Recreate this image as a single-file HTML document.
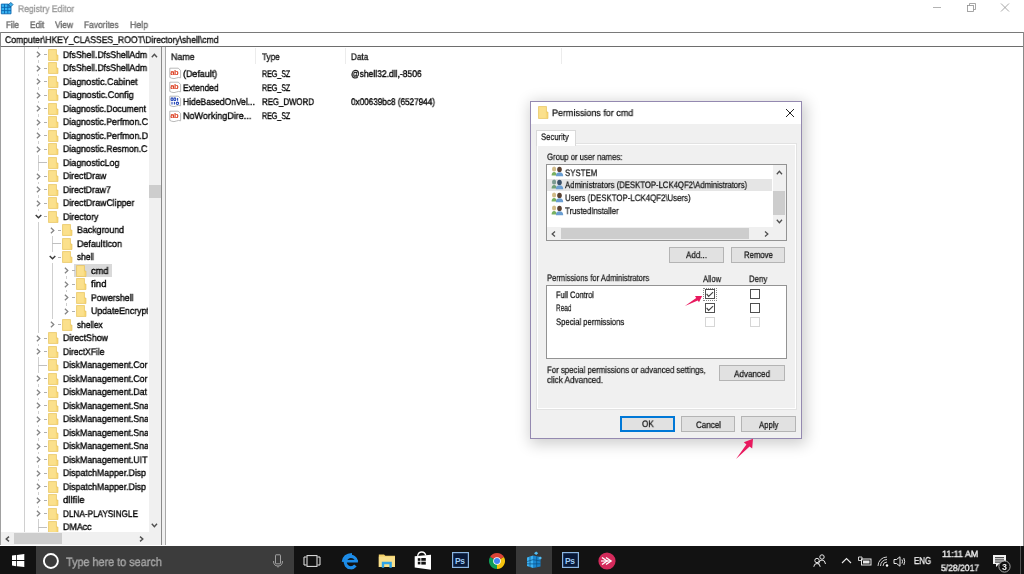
<!DOCTYPE html>
<html><head><meta charset="utf-8">
<style>
*{margin:0;padding:0;box-sizing:border-box}
html,body{width:1024px;height:574px;overflow:hidden;background:#fff}
body{position:relative;font-family:"Liberation Sans",sans-serif;color:#000}
.ab{position:absolute}
.t{position:absolute;white-space:nowrap;line-height:1;text-rendering:geometricPrecision;-webkit-text-stroke:0.35px currentColor;will-change:transform}
.dt{position:absolute;white-space:nowrap;line-height:1;font-size:8px;letter-spacing:-0.15px;color:#1a1a1a}
svg{position:absolute;overflow:visible}
</style></head><body>

<svg style="left:0px;top:0px" width="16" height="16" viewBox="0 0 16 16">
<path d="M1.3 4.1 H8.6 V6.4 H11 V13.8 H1.3 Z" fill="#38b4f2"/>
<g stroke="#0b66b0" stroke-width="0.9" fill="none"><path d="M1.3 4.1 H8.6 V6.4 H11 V13.8 H1.3 Z"/><line x1="4.5" y1="4.1" x2="4.5" y2="13.8"/><line x1="7.8" y1="4.1" x2="7.8" y2="13.8"/><line x1="1.3" y1="7.4" x2="11" y2="7.4"/><line x1="1.3" y1="10.6" x2="11" y2="10.6"/></g>
<polygon points="10.8,2.4 13,4.6 10.8,6.8 8.6,4.6" fill="#3ab0ee" stroke="#0b5a96" stroke-width="0.8"/>
</svg>
<div class="t" style="left:17.50px;top:5.00px;font-size:9.6px;letter-spacing:0px;color:#9a9a9a;transform:scaleX(0.8928);transform-origin:0 0;">Registry Editor</div>
<svg style="left:925px;top:0px" width="99" height="16" viewBox="0 0 99 16">
<line x1="8" y1="7.5" x2="16" y2="7.5" stroke="#a0a0a0" stroke-width="0.8"/>
<rect x="42.5" y="5.5" width="6" height="6" fill="none" stroke="#909090" stroke-width="0.8"/>
<polyline points="44.5,5.5 44.5,3.5 50.5,3.5 50.5,9.5 48.5,9.5" fill="none" stroke="#909090" stroke-width="0.8"/>
<line x1="76" y1="3.5" x2="84" y2="11.5" stroke="#909090" stroke-width="0.8"/>
<line x1="84" y1="3.5" x2="76" y2="11.5" stroke="#909090" stroke-width="0.8"/>
</svg>
<div class="t" style="left:5.80px;top:21.00px;font-size:9.6px;letter-spacing:0px;color:#6a6a6a;transform:scaleX(0.8404);transform-origin:0 0;">File</div>
<div class="t" style="left:29.70px;top:21.00px;font-size:9.6px;letter-spacing:0px;color:#6a6a6a;transform:scaleX(0.8645);transform-origin:0 0;">Edit</div>
<div class="t" style="left:55.00px;top:21.00px;font-size:9.6px;letter-spacing:0px;color:#6a6a6a;transform:scaleX(0.8723);transform-origin:0 0;">View</div>
<div class="t" style="left:84.40px;top:21.00px;font-size:9.6px;letter-spacing:0px;color:#6a6a6a;transform:scaleX(0.8765);transform-origin:0 0;">Favorites</div>
<div class="t" style="left:130.00px;top:21.00px;font-size:9.6px;letter-spacing:0px;color:#6a6a6a;transform:scaleX(0.9117);transform-origin:0 0;">Help</div>
<div class="ab" style="left:0px;top:32px;width:1024px;height:1px;background:#7a7a7a;"></div>
<div class="ab" style="left:0px;top:46px;width:1024px;height:1px;background:#6e6e6e;"></div>
<div class="ab" style="left:0px;top:32px;width:1px;height:15px;background:#8a8a8a;"></div>
<div class="ab" style="left:1023px;top:32px;width:1px;height:514px;background:#8a8a8a;"></div>
<div class="t" style="left:5.00px;top:36.00px;font-size:9.6px;letter-spacing:0px;color:#111;transform:scaleX(0.8977);transform-origin:0 0;">Computer\HKEY_CLASSES_ROOT\Directory\shell\cmd</div>
<div class="ab" style="left:0px;top:47px;width:1px;height:498px;background:#a0a0a0;"></div>
<div class="ab" style="left:161px;top:47px;width:1px;height:498px;background:#8a8a8a;"></div>
<div class="ab" style="left:162px;top:47px;width:3px;height:498px;background:#f0f0f0;"></div>
<div class="ab" style="left:165px;top:47px;width:1px;height:498px;background:#a8a8a8;"></div>
<div class="ab" style="left:24px;top:47px;width:1px;height:485px;background:#d0d0d0;"></div>
<div class="ab" style="left:1px;top:47px;width:147px;height:485px;overflow:hidden">
<div class="ab" style="left:37px;top:0px;width:1px;height:485px;background:#cfcfcf"></div>
<div class="ab" style="left:51px;top:183.0px;width:1px;height:94.5px;background:#cfcfcf"></div>
<div class="ab" style="left:65px;top:223.5px;width:1px;height:40.5px;background:#cfcfcf"></div>
<div class="ab" style="left:72.5px;top:217.3px;width:38px;height:12.5px;background:#d9d9d9"></div>
<div class="ab" style="left:33px;top:2.0px;width:9px;height:11px;background:#fff;"></div>
<svg style="left:34.5px;top:4.0px" width="5" height="7" viewBox="0 0 5 7"><polyline points="0.9,0.7 3.8,3.5 0.9,6.3" fill="none" stroke="#858585" stroke-width="1.3"/></svg>
<div class="ab" style="left:42.6px;top:7.0px;width:3px;height:1px;background:#b0b0b0;"></div>
<svg style="left:47px;top:1.7999999999999972px" width="11" height="12" viewBox="0 0 11 12"><path d="M0.5 0.5 H8.5 V6 H10 V11.5 H0.5 Z" fill="#f8d878" stroke="#e6bf55" stroke-width="0.6"/><rect x="1.2" y="1.2" width="6.6" height="9.6" fill="#fbe08c"/></svg>
<div class="t" style="left:61.50px;top:4.00px;font-size:9.6px;letter-spacing:0px;color:#000;transform:scaleX(0.8967);transform-origin:0 0;">DfsShell.DfsShellAdm</div>
<div class="ab" style="left:33px;top:15.5px;width:9px;height:11px;background:#fff;"></div>
<svg style="left:34.5px;top:17.5px" width="5" height="7" viewBox="0 0 5 7"><polyline points="0.9,0.7 3.8,3.5 0.9,6.3" fill="none" stroke="#858585" stroke-width="1.3"/></svg>
<div class="ab" style="left:42.6px;top:20.5px;width:3px;height:1px;background:#b0b0b0;"></div>
<svg style="left:47px;top:15.299999999999997px" width="11" height="12" viewBox="0 0 11 12"><path d="M0.5 0.5 H8.5 V6 H10 V11.5 H0.5 Z" fill="#f8d878" stroke="#e6bf55" stroke-width="0.6"/><rect x="1.2" y="1.2" width="6.6" height="9.6" fill="#fbe08c"/></svg>
<div class="t" style="left:61.50px;top:17.00px;font-size:9.6px;letter-spacing:0px;color:#000;transform:scaleX(0.8967);transform-origin:0 0;">DfsShell.DfsShellAdm</div>
<div class="ab" style="left:33px;top:29.0px;width:9px;height:11px;background:#fff;"></div>
<svg style="left:34.5px;top:31.0px" width="5" height="7" viewBox="0 0 5 7"><polyline points="0.9,0.7 3.8,3.5 0.9,6.3" fill="none" stroke="#858585" stroke-width="1.3"/></svg>
<div class="ab" style="left:42.6px;top:34.0px;width:3px;height:1px;background:#b0b0b0;"></div>
<svg style="left:47px;top:28.799999999999997px" width="11" height="12" viewBox="0 0 11 12"><path d="M0.5 0.5 H8.5 V6 H10 V11.5 H0.5 Z" fill="#f8d878" stroke="#e6bf55" stroke-width="0.6"/><rect x="1.2" y="1.2" width="6.6" height="9.6" fill="#fbe08c"/></svg>
<div class="t" style="left:61.50px;top:31.00px;font-size:9.6px;letter-spacing:0px;color:#000;transform:scaleX(0.9271);transform-origin:0 0;">Diagnostic.Cabinet</div>
<div class="ab" style="left:33px;top:42.5px;width:9px;height:11px;background:#fff;"></div>
<svg style="left:34.5px;top:44.5px" width="5" height="7" viewBox="0 0 5 7"><polyline points="0.9,0.7 3.8,3.5 0.9,6.3" fill="none" stroke="#858585" stroke-width="1.3"/></svg>
<div class="ab" style="left:42.6px;top:47.5px;width:3px;height:1px;background:#b0b0b0;"></div>
<svg style="left:47px;top:42.3px" width="11" height="12" viewBox="0 0 11 12"><path d="M0.5 0.5 H8.5 V6 H10 V11.5 H0.5 Z" fill="#f8d878" stroke="#e6bf55" stroke-width="0.6"/><rect x="1.2" y="1.2" width="6.6" height="9.6" fill="#fbe08c"/></svg>
<div class="t" style="left:61.50px;top:44.00px;font-size:9.6px;letter-spacing:0px;color:#000;transform:scaleX(0.9410);transform-origin:0 0;">Diagnostic.Config</div>
<div class="ab" style="left:33px;top:56.0px;width:9px;height:11px;background:#fff;"></div>
<svg style="left:34.5px;top:58.0px" width="5" height="7" viewBox="0 0 5 7"><polyline points="0.9,0.7 3.8,3.5 0.9,6.3" fill="none" stroke="#858585" stroke-width="1.3"/></svg>
<div class="ab" style="left:42.6px;top:61.0px;width:3px;height:1px;background:#b0b0b0;"></div>
<svg style="left:47px;top:55.8px" width="11" height="12" viewBox="0 0 11 12"><path d="M0.5 0.5 H8.5 V6 H10 V11.5 H0.5 Z" fill="#f8d878" stroke="#e6bf55" stroke-width="0.6"/><rect x="1.2" y="1.2" width="6.6" height="9.6" fill="#fbe08c"/></svg>
<div class="t" style="left:61.50px;top:58.00px;font-size:9.6px;letter-spacing:0px;color:#000;transform:scaleX(0.9100);transform-origin:0 0;">Diagnostic.Document</div>
<div class="ab" style="left:33px;top:69.5px;width:9px;height:11px;background:#fff;"></div>
<svg style="left:34.5px;top:71.5px" width="5" height="7" viewBox="0 0 5 7"><polyline points="0.9,0.7 3.8,3.5 0.9,6.3" fill="none" stroke="#858585" stroke-width="1.3"/></svg>
<div class="ab" style="left:42.6px;top:74.5px;width:3px;height:1px;background:#b0b0b0;"></div>
<svg style="left:47px;top:69.3px" width="11" height="12" viewBox="0 0 11 12"><path d="M0.5 0.5 H8.5 V6 H10 V11.5 H0.5 Z" fill="#f8d878" stroke="#e6bf55" stroke-width="0.6"/><rect x="1.2" y="1.2" width="6.6" height="9.6" fill="#fbe08c"/></svg>
<div class="t" style="left:61.50px;top:71.00px;font-size:9.6px;letter-spacing:0px;color:#000;transform:scaleX(0.9100);transform-origin:0 0;">Diagnostic.Perfmon.C</div>
<div class="ab" style="left:33px;top:83.0px;width:9px;height:11px;background:#fff;"></div>
<svg style="left:34.5px;top:85.0px" width="5" height="7" viewBox="0 0 5 7"><polyline points="0.9,0.7 3.8,3.5 0.9,6.3" fill="none" stroke="#858585" stroke-width="1.3"/></svg>
<div class="ab" style="left:42.6px;top:88.0px;width:3px;height:1px;background:#b0b0b0;"></div>
<svg style="left:47px;top:82.80000000000001px" width="11" height="12" viewBox="0 0 11 12"><path d="M0.5 0.5 H8.5 V6 H10 V11.5 H0.5 Z" fill="#f8d878" stroke="#e6bf55" stroke-width="0.6"/><rect x="1.2" y="1.2" width="6.6" height="9.6" fill="#fbe08c"/></svg>
<div class="t" style="left:61.50px;top:85.00px;font-size:9.6px;letter-spacing:0px;color:#000;transform:scaleX(0.9100);transform-origin:0 0;">Diagnostic.Perfmon.D</div>
<div class="ab" style="left:33px;top:96.5px;width:9px;height:11px;background:#fff;"></div>
<svg style="left:34.5px;top:98.5px" width="5" height="7" viewBox="0 0 5 7"><polyline points="0.9,0.7 3.8,3.5 0.9,6.3" fill="none" stroke="#858585" stroke-width="1.3"/></svg>
<div class="ab" style="left:42.6px;top:101.5px;width:3px;height:1px;background:#b0b0b0;"></div>
<svg style="left:47px;top:96.30000000000001px" width="11" height="12" viewBox="0 0 11 12"><path d="M0.5 0.5 H8.5 V6 H10 V11.5 H0.5 Z" fill="#f8d878" stroke="#e6bf55" stroke-width="0.6"/><rect x="1.2" y="1.2" width="6.6" height="9.6" fill="#fbe08c"/></svg>
<div class="t" style="left:61.50px;top:98.00px;font-size:9.6px;letter-spacing:0px;color:#000;transform:scaleX(0.9100);transform-origin:0 0;">Diagnostic.Resmon.C</div>
<div class="ab" style="left:37px;top:115.0px;width:9px;height:1px;background:#c0c0c0;"></div>
<svg style="left:47px;top:109.80000000000001px" width="11" height="12" viewBox="0 0 11 12"><path d="M0.5 0.5 H8.5 V6 H10 V11.5 H0.5 Z" fill="#f8d878" stroke="#e6bf55" stroke-width="0.6"/><rect x="1.2" y="1.2" width="6.6" height="9.6" fill="#fbe08c"/></svg>
<div class="t" style="left:61.50px;top:112.00px;font-size:9.6px;letter-spacing:0px;color:#000;transform:scaleX(0.9271);transform-origin:0 0;">DiagnosticLog</div>
<div class="ab" style="left:33px;top:123.5px;width:9px;height:11px;background:#fff;"></div>
<svg style="left:34.5px;top:125.5px" width="5" height="7" viewBox="0 0 5 7"><polyline points="0.9,0.7 3.8,3.5 0.9,6.3" fill="none" stroke="#858585" stroke-width="1.3"/></svg>
<div class="ab" style="left:42.6px;top:128.5px;width:3px;height:1px;background:#b0b0b0;"></div>
<svg style="left:47px;top:123.30000000000001px" width="11" height="12" viewBox="0 0 11 12"><path d="M0.5 0.5 H8.5 V6 H10 V11.5 H0.5 Z" fill="#f8d878" stroke="#e6bf55" stroke-width="0.6"/><rect x="1.2" y="1.2" width="6.6" height="9.6" fill="#fbe08c"/></svg>
<div class="t" style="left:61.50px;top:125.00px;font-size:9.6px;letter-spacing:0px;color:#000;transform:scaleX(0.9122);transform-origin:0 0;">DirectDraw</div>
<div class="ab" style="left:33px;top:137.0px;width:9px;height:11px;background:#fff;"></div>
<svg style="left:34.5px;top:139.0px" width="5" height="7" viewBox="0 0 5 7"><polyline points="0.9,0.7 3.8,3.5 0.9,6.3" fill="none" stroke="#858585" stroke-width="1.3"/></svg>
<div class="ab" style="left:42.6px;top:142.0px;width:3px;height:1px;background:#b0b0b0;"></div>
<svg style="left:47px;top:136.8px" width="11" height="12" viewBox="0 0 11 12"><path d="M0.5 0.5 H8.5 V6 H10 V11.5 H0.5 Z" fill="#f8d878" stroke="#e6bf55" stroke-width="0.6"/><rect x="1.2" y="1.2" width="6.6" height="9.6" fill="#fbe08c"/></svg>
<div class="t" style="left:61.50px;top:139.00px;font-size:9.6px;letter-spacing:0px;color:#000;transform:scaleX(0.9052);transform-origin:0 0;">DirectDraw7</div>
<div class="ab" style="left:33px;top:150.5px;width:9px;height:11px;background:#fff;"></div>
<svg style="left:34.5px;top:152.5px" width="5" height="7" viewBox="0 0 5 7"><polyline points="0.9,0.7 3.8,3.5 0.9,6.3" fill="none" stroke="#858585" stroke-width="1.3"/></svg>
<div class="ab" style="left:42.6px;top:155.5px;width:3px;height:1px;background:#b0b0b0;"></div>
<svg style="left:47px;top:150.3px" width="11" height="12" viewBox="0 0 11 12"><path d="M0.5 0.5 H8.5 V6 H10 V11.5 H0.5 Z" fill="#f8d878" stroke="#e6bf55" stroke-width="0.6"/><rect x="1.2" y="1.2" width="6.6" height="9.6" fill="#fbe08c"/></svg>
<div class="t" style="left:61.50px;top:152.00px;font-size:9.6px;letter-spacing:0px;color:#000;transform:scaleX(0.9155);transform-origin:0 0;">DirectDrawClipper</div>
<div class="ab" style="left:32.5px;top:164.0px;width:10px;height:11px;background:#fff;"></div>
<svg style="left:33.5px;top:167.0px" width="7" height="5" viewBox="0 0 7 5"><polyline points="0.7,0.9 3.5,3.8 6.3,0.9" fill="none" stroke="#3a3a3a" stroke-width="1.4"/></svg>
<div class="ab" style="left:42.6px;top:169.0px;width:3px;height:1px;background:#b0b0b0;"></div>
<svg style="left:47px;top:163.8px" width="11" height="12" viewBox="0 0 11 12"><path d="M0.5 0.5 H8.5 V6 H10 V11.5 H0.5 Z" fill="#f8d878" stroke="#e6bf55" stroke-width="0.6"/><rect x="1.2" y="1.2" width="6.6" height="9.6" fill="#fbe08c"/></svg>
<div class="t" style="left:61.50px;top:166.00px;font-size:9.6px;letter-spacing:0px;color:#000;transform:scaleX(0.9244);transform-origin:0 0;">Directory</div>
<div class="ab" style="left:47px;top:177.5px;width:9px;height:11px;background:#fff;"></div>
<svg style="left:48.5px;top:179.5px" width="5" height="7" viewBox="0 0 5 7"><polyline points="0.9,0.7 3.8,3.5 0.9,6.3" fill="none" stroke="#858585" stroke-width="1.3"/></svg>
<div class="ab" style="left:56.6px;top:182.5px;width:3px;height:1px;background:#b0b0b0;"></div>
<svg style="left:61px;top:177.3px" width="11" height="12" viewBox="0 0 11 12"><path d="M0.5 0.5 H8.5 V6 H10 V11.5 H0.5 Z" fill="#f8d878" stroke="#e6bf55" stroke-width="0.6"/><rect x="1.2" y="1.2" width="6.6" height="9.6" fill="#fbe08c"/></svg>
<div class="t" style="left:76.00px;top:179.00px;font-size:9.6px;letter-spacing:0px;color:#000;transform:scaleX(0.9194);transform-origin:0 0;">Background</div>
<div class="ab" style="left:51px;top:196.0px;width:9px;height:1px;background:#c0c0c0;"></div>
<svg style="left:61px;top:190.8px" width="11" height="12" viewBox="0 0 11 12"><path d="M0.5 0.5 H8.5 V6 H10 V11.5 H0.5 Z" fill="#f8d878" stroke="#e6bf55" stroke-width="0.6"/><rect x="1.2" y="1.2" width="6.6" height="9.6" fill="#fbe08c"/></svg>
<div class="t" style="left:76.00px;top:193.00px;font-size:9.6px;letter-spacing:0px;color:#000;transform:scaleX(0.9267);transform-origin:0 0;">DefaultIcon</div>
<div class="ab" style="left:46.5px;top:204.5px;width:10px;height:11px;background:#fff;"></div>
<svg style="left:47.5px;top:207.5px" width="7" height="5" viewBox="0 0 7 5"><polyline points="0.7,0.9 3.5,3.8 6.3,0.9" fill="none" stroke="#3a3a3a" stroke-width="1.4"/></svg>
<div class="ab" style="left:56.6px;top:209.5px;width:3px;height:1px;background:#b0b0b0;"></div>
<svg style="left:61px;top:204.3px" width="11" height="12" viewBox="0 0 11 12"><path d="M0.5 0.5 H8.5 V6 H10 V11.5 H0.5 Z" fill="#f8d878" stroke="#e6bf55" stroke-width="0.6"/><rect x="1.2" y="1.2" width="6.6" height="9.6" fill="#fbe08c"/></svg>
<div class="t" style="left:76.00px;top:206.00px;font-size:9.6px;letter-spacing:0px;color:#000;transform:scaleX(0.8611);transform-origin:0 0;">shell</div>
<div class="ab" style="left:61px;top:218.0px;width:9px;height:11px;background:#fff;"></div>
<svg style="left:62.5px;top:220.0px" width="5" height="7" viewBox="0 0 5 7"><polyline points="0.9,0.7 3.8,3.5 0.9,6.3" fill="none" stroke="#858585" stroke-width="1.3"/></svg>
<div class="ab" style="left:70.6px;top:223.0px;width:3px;height:1px;background:#b0b0b0;"></div>
<svg style="left:75px;top:217.8px" width="11" height="12" viewBox="0 0 11 12"><path d="M0.5 0.5 H8.5 V6 H10 V11.5 H0.5 Z" fill="#f8d878" stroke="#e6bf55" stroke-width="0.6"/><rect x="1.2" y="1.2" width="6.6" height="9.6" fill="#fbe08c"/></svg>
<div class="t" style="left:89.90px;top:220.00px;font-size:9.6px;letter-spacing:0px;color:#000;transform:scaleX(0.9650);transform-origin:0 0;">cmd</div>
<div class="ab" style="left:61px;top:231.5px;width:9px;height:11px;background:#fff;"></div>
<svg style="left:62.5px;top:233.5px" width="5" height="7" viewBox="0 0 5 7"><polyline points="0.9,0.7 3.8,3.5 0.9,6.3" fill="none" stroke="#858585" stroke-width="1.3"/></svg>
<div class="ab" style="left:70.6px;top:236.5px;width:3px;height:1px;background:#b0b0b0;"></div>
<svg style="left:75px;top:231.3px" width="11" height="12" viewBox="0 0 11 12"><path d="M0.5 0.5 H8.5 V6 H10 V11.5 H0.5 Z" fill="#f8d878" stroke="#e6bf55" stroke-width="0.6"/><rect x="1.2" y="1.2" width="6.6" height="9.6" fill="#fbe08c"/></svg>
<div class="t" style="left:89.90px;top:233.00px;font-size:9.6px;letter-spacing:0px;color:#000;transform:scaleX(0.9950);transform-origin:0 0;">find</div>
<div class="ab" style="left:61px;top:245.0px;width:9px;height:11px;background:#fff;"></div>
<svg style="left:62.5px;top:247.0px" width="5" height="7" viewBox="0 0 5 7"><polyline points="0.9,0.7 3.8,3.5 0.9,6.3" fill="none" stroke="#858585" stroke-width="1.3"/></svg>
<div class="ab" style="left:70.6px;top:250.0px;width:3px;height:1px;background:#b0b0b0;"></div>
<svg style="left:75px;top:244.8px" width="11" height="12" viewBox="0 0 11 12"><path d="M0.5 0.5 H8.5 V6 H10 V11.5 H0.5 Z" fill="#f8d878" stroke="#e6bf55" stroke-width="0.6"/><rect x="1.2" y="1.2" width="6.6" height="9.6" fill="#fbe08c"/></svg>
<div class="t" style="left:89.90px;top:247.00px;font-size:9.6px;letter-spacing:0px;color:#000;transform:scaleX(0.9030);transform-origin:0 0;">Powershell</div>
<div class="ab" style="left:61px;top:258.5px;width:9px;height:11px;background:#fff;"></div>
<svg style="left:62.5px;top:260.5px" width="5" height="7" viewBox="0 0 5 7"><polyline points="0.9,0.7 3.8,3.5 0.9,6.3" fill="none" stroke="#858585" stroke-width="1.3"/></svg>
<div class="ab" style="left:70.6px;top:263.5px;width:3px;height:1px;background:#b0b0b0;"></div>
<svg style="left:75px;top:258.3px" width="11" height="12" viewBox="0 0 11 12"><path d="M0.5 0.5 H8.5 V6 H10 V11.5 H0.5 Z" fill="#f8d878" stroke="#e6bf55" stroke-width="0.6"/><rect x="1.2" y="1.2" width="6.6" height="9.6" fill="#fbe08c"/></svg>
<div class="t" style="left:89.90px;top:260.00px;font-size:9.6px;letter-spacing:0px;color:#000;transform:scaleX(0.9100);transform-origin:0 0;">UpdateEncrypt</div>
<div class="ab" style="left:47px;top:272.0px;width:9px;height:11px;background:#fff;"></div>
<svg style="left:48.5px;top:274.0px" width="5" height="7" viewBox="0 0 5 7"><polyline points="0.9,0.7 3.8,3.5 0.9,6.3" fill="none" stroke="#858585" stroke-width="1.3"/></svg>
<div class="ab" style="left:56.6px;top:277.0px;width:3px;height:1px;background:#b0b0b0;"></div>
<svg style="left:61px;top:271.8px" width="11" height="12" viewBox="0 0 11 12"><path d="M0.5 0.5 H8.5 V6 H10 V11.5 H0.5 Z" fill="#f8d878" stroke="#e6bf55" stroke-width="0.6"/><rect x="1.2" y="1.2" width="6.6" height="9.6" fill="#fbe08c"/></svg>
<div class="t" style="left:76.00px;top:274.00px;font-size:9.6px;letter-spacing:0px;color:#000;transform:scaleX(0.8601);transform-origin:0 0;">shellex</div>
<div class="ab" style="left:33px;top:285.5px;width:9px;height:11px;background:#fff;"></div>
<svg style="left:34.5px;top:287.5px" width="5" height="7" viewBox="0 0 5 7"><polyline points="0.9,0.7 3.8,3.5 0.9,6.3" fill="none" stroke="#858585" stroke-width="1.3"/></svg>
<div class="ab" style="left:42.6px;top:290.5px;width:3px;height:1px;background:#b0b0b0;"></div>
<svg style="left:47px;top:285.3px" width="11" height="12" viewBox="0 0 11 12"><path d="M0.5 0.5 H8.5 V6 H10 V11.5 H0.5 Z" fill="#f8d878" stroke="#e6bf55" stroke-width="0.6"/><rect x="1.2" y="1.2" width="6.6" height="9.6" fill="#fbe08c"/></svg>
<div class="t" style="left:61.50px;top:287.00px;font-size:9.6px;letter-spacing:0px;color:#000;transform:scaleX(0.9189);transform-origin:0 0;">DirectShow</div>
<div class="ab" style="left:33px;top:299.0px;width:9px;height:11px;background:#fff;"></div>
<svg style="left:34.5px;top:301.0px" width="5" height="7" viewBox="0 0 5 7"><polyline points="0.9,0.7 3.8,3.5 0.9,6.3" fill="none" stroke="#858585" stroke-width="1.3"/></svg>
<div class="ab" style="left:42.6px;top:304.0px;width:3px;height:1px;background:#b0b0b0;"></div>
<svg style="left:47px;top:298.8px" width="11" height="12" viewBox="0 0 11 12"><path d="M0.5 0.5 H8.5 V6 H10 V11.5 H0.5 Z" fill="#f8d878" stroke="#e6bf55" stroke-width="0.6"/><rect x="1.2" y="1.2" width="6.6" height="9.6" fill="#fbe08c"/></svg>
<div class="t" style="left:61.50px;top:301.00px;font-size:9.6px;letter-spacing:0px;color:#000;transform:scaleX(0.8841);transform-origin:0 0;">DirectXFile</div>
<div class="ab" style="left:37px;top:317.5px;width:9px;height:1px;background:#c0c0c0;"></div>
<svg style="left:47px;top:312.3px" width="11" height="12" viewBox="0 0 11 12"><path d="M0.5 0.5 H8.5 V6 H10 V11.5 H0.5 Z" fill="#f8d878" stroke="#e6bf55" stroke-width="0.6"/><rect x="1.2" y="1.2" width="6.6" height="9.6" fill="#fbe08c"/></svg>
<div class="t" style="left:61.50px;top:314.00px;font-size:9.6px;letter-spacing:0px;color:#000;transform:scaleX(0.9100);transform-origin:0 0;">DiskManagement.Cor</div>
<div class="ab" style="left:33px;top:326.0px;width:9px;height:11px;background:#fff;"></div>
<svg style="left:34.5px;top:328.0px" width="5" height="7" viewBox="0 0 5 7"><polyline points="0.9,0.7 3.8,3.5 0.9,6.3" fill="none" stroke="#858585" stroke-width="1.3"/></svg>
<div class="ab" style="left:42.6px;top:331.0px;width:3px;height:1px;background:#b0b0b0;"></div>
<svg style="left:47px;top:325.8px" width="11" height="12" viewBox="0 0 11 12"><path d="M0.5 0.5 H8.5 V6 H10 V11.5 H0.5 Z" fill="#f8d878" stroke="#e6bf55" stroke-width="0.6"/><rect x="1.2" y="1.2" width="6.6" height="9.6" fill="#fbe08c"/></svg>
<div class="t" style="left:61.50px;top:328.00px;font-size:9.6px;letter-spacing:0px;color:#000;transform:scaleX(0.9100);transform-origin:0 0;">DiskManagement.Cor</div>
<div class="ab" style="left:33px;top:339.5px;width:9px;height:11px;background:#fff;"></div>
<svg style="left:34.5px;top:341.5px" width="5" height="7" viewBox="0 0 5 7"><polyline points="0.9,0.7 3.8,3.5 0.9,6.3" fill="none" stroke="#858585" stroke-width="1.3"/></svg>
<div class="ab" style="left:42.6px;top:344.5px;width:3px;height:1px;background:#b0b0b0;"></div>
<svg style="left:47px;top:339.3px" width="11" height="12" viewBox="0 0 11 12"><path d="M0.5 0.5 H8.5 V6 H10 V11.5 H0.5 Z" fill="#f8d878" stroke="#e6bf55" stroke-width="0.6"/><rect x="1.2" y="1.2" width="6.6" height="9.6" fill="#fbe08c"/></svg>
<div class="t" style="left:61.50px;top:341.00px;font-size:9.6px;letter-spacing:0px;color:#000;transform:scaleX(0.9100);transform-origin:0 0;">DiskManagement.Dat</div>
<div class="ab" style="left:33px;top:353.0px;width:9px;height:11px;background:#fff;"></div>
<svg style="left:34.5px;top:355.0px" width="5" height="7" viewBox="0 0 5 7"><polyline points="0.9,0.7 3.8,3.5 0.9,6.3" fill="none" stroke="#858585" stroke-width="1.3"/></svg>
<div class="ab" style="left:42.6px;top:358.0px;width:3px;height:1px;background:#b0b0b0;"></div>
<svg style="left:47px;top:352.8px" width="11" height="12" viewBox="0 0 11 12"><path d="M0.5 0.5 H8.5 V6 H10 V11.5 H0.5 Z" fill="#f8d878" stroke="#e6bf55" stroke-width="0.6"/><rect x="1.2" y="1.2" width="6.6" height="9.6" fill="#fbe08c"/></svg>
<div class="t" style="left:61.50px;top:355.00px;font-size:9.6px;letter-spacing:0px;color:#000;transform:scaleX(0.9100);transform-origin:0 0;">DiskManagement.Sna</div>
<div class="ab" style="left:33px;top:366.5px;width:9px;height:11px;background:#fff;"></div>
<svg style="left:34.5px;top:368.5px" width="5" height="7" viewBox="0 0 5 7"><polyline points="0.9,0.7 3.8,3.5 0.9,6.3" fill="none" stroke="#858585" stroke-width="1.3"/></svg>
<div class="ab" style="left:42.6px;top:371.5px;width:3px;height:1px;background:#b0b0b0;"></div>
<svg style="left:47px;top:366.3px" width="11" height="12" viewBox="0 0 11 12"><path d="M0.5 0.5 H8.5 V6 H10 V11.5 H0.5 Z" fill="#f8d878" stroke="#e6bf55" stroke-width="0.6"/><rect x="1.2" y="1.2" width="6.6" height="9.6" fill="#fbe08c"/></svg>
<div class="t" style="left:61.50px;top:368.00px;font-size:9.6px;letter-spacing:0px;color:#000;transform:scaleX(0.9100);transform-origin:0 0;">DiskManagement.Sna</div>
<div class="ab" style="left:33px;top:380.0px;width:9px;height:11px;background:#fff;"></div>
<svg style="left:34.5px;top:382.0px" width="5" height="7" viewBox="0 0 5 7"><polyline points="0.9,0.7 3.8,3.5 0.9,6.3" fill="none" stroke="#858585" stroke-width="1.3"/></svg>
<div class="ab" style="left:42.6px;top:385.0px;width:3px;height:1px;background:#b0b0b0;"></div>
<svg style="left:47px;top:379.8px" width="11" height="12" viewBox="0 0 11 12"><path d="M0.5 0.5 H8.5 V6 H10 V11.5 H0.5 Z" fill="#f8d878" stroke="#e6bf55" stroke-width="0.6"/><rect x="1.2" y="1.2" width="6.6" height="9.6" fill="#fbe08c"/></svg>
<div class="t" style="left:61.50px;top:382.00px;font-size:9.6px;letter-spacing:0px;color:#000;transform:scaleX(0.9100);transform-origin:0 0;">DiskManagement.Sna</div>
<div class="ab" style="left:33px;top:393.5px;width:9px;height:11px;background:#fff;"></div>
<svg style="left:34.5px;top:395.5px" width="5" height="7" viewBox="0 0 5 7"><polyline points="0.9,0.7 3.8,3.5 0.9,6.3" fill="none" stroke="#858585" stroke-width="1.3"/></svg>
<div class="ab" style="left:42.6px;top:398.5px;width:3px;height:1px;background:#b0b0b0;"></div>
<svg style="left:47px;top:393.3px" width="11" height="12" viewBox="0 0 11 12"><path d="M0.5 0.5 H8.5 V6 H10 V11.5 H0.5 Z" fill="#f8d878" stroke="#e6bf55" stroke-width="0.6"/><rect x="1.2" y="1.2" width="6.6" height="9.6" fill="#fbe08c"/></svg>
<div class="t" style="left:61.50px;top:395.00px;font-size:9.6px;letter-spacing:0px;color:#000;transform:scaleX(0.9100);transform-origin:0 0;">DiskManagement.Sna</div>
<div class="ab" style="left:33px;top:407.0px;width:9px;height:11px;background:#fff;"></div>
<svg style="left:34.5px;top:409.0px" width="5" height="7" viewBox="0 0 5 7"><polyline points="0.9,0.7 3.8,3.5 0.9,6.3" fill="none" stroke="#858585" stroke-width="1.3"/></svg>
<div class="ab" style="left:42.6px;top:412.0px;width:3px;height:1px;background:#b0b0b0;"></div>
<svg style="left:47px;top:406.8px" width="11" height="12" viewBox="0 0 11 12"><path d="M0.5 0.5 H8.5 V6 H10 V11.5 H0.5 Z" fill="#f8d878" stroke="#e6bf55" stroke-width="0.6"/><rect x="1.2" y="1.2" width="6.6" height="9.6" fill="#fbe08c"/></svg>
<div class="t" style="left:61.50px;top:409.00px;font-size:9.6px;letter-spacing:0px;color:#000;transform:scaleX(0.9100);transform-origin:0 0;">DiskManagement.UIT</div>
<div class="ab" style="left:33px;top:420.5px;width:9px;height:11px;background:#fff;"></div>
<svg style="left:34.5px;top:422.5px" width="5" height="7" viewBox="0 0 5 7"><polyline points="0.9,0.7 3.8,3.5 0.9,6.3" fill="none" stroke="#858585" stroke-width="1.3"/></svg>
<div class="ab" style="left:42.6px;top:425.5px;width:3px;height:1px;background:#b0b0b0;"></div>
<svg style="left:47px;top:420.3px" width="11" height="12" viewBox="0 0 11 12"><path d="M0.5 0.5 H8.5 V6 H10 V11.5 H0.5 Z" fill="#f8d878" stroke="#e6bf55" stroke-width="0.6"/><rect x="1.2" y="1.2" width="6.6" height="9.6" fill="#fbe08c"/></svg>
<div class="t" style="left:61.50px;top:422.00px;font-size:9.6px;letter-spacing:0px;color:#000;transform:scaleX(0.9100);transform-origin:0 0;">DispatchMapper.Disp</div>
<div class="ab" style="left:33px;top:434.0px;width:9px;height:11px;background:#fff;"></div>
<svg style="left:34.5px;top:436.0px" width="5" height="7" viewBox="0 0 5 7"><polyline points="0.9,0.7 3.8,3.5 0.9,6.3" fill="none" stroke="#858585" stroke-width="1.3"/></svg>
<div class="ab" style="left:42.6px;top:439.0px;width:3px;height:1px;background:#b0b0b0;"></div>
<svg style="left:47px;top:433.8px" width="11" height="12" viewBox="0 0 11 12"><path d="M0.5 0.5 H8.5 V6 H10 V11.5 H0.5 Z" fill="#f8d878" stroke="#e6bf55" stroke-width="0.6"/><rect x="1.2" y="1.2" width="6.6" height="9.6" fill="#fbe08c"/></svg>
<div class="t" style="left:61.50px;top:436.00px;font-size:9.6px;letter-spacing:0px;color:#000;transform:scaleX(0.9100);transform-origin:0 0;">DispatchMapper.Disp</div>
<div class="ab" style="left:33px;top:447.5px;width:9px;height:11px;background:#fff;"></div>
<svg style="left:34.5px;top:449.5px" width="5" height="7" viewBox="0 0 5 7"><polyline points="0.9,0.7 3.8,3.5 0.9,6.3" fill="none" stroke="#858585" stroke-width="1.3"/></svg>
<div class="ab" style="left:42.6px;top:452.5px;width:3px;height:1px;background:#b0b0b0;"></div>
<svg style="left:47px;top:447.3px" width="11" height="12" viewBox="0 0 11 12"><path d="M0.5 0.5 H8.5 V6 H10 V11.5 H0.5 Z" fill="#f8d878" stroke="#e6bf55" stroke-width="0.6"/><rect x="1.2" y="1.2" width="6.6" height="9.6" fill="#fbe08c"/></svg>
<div class="t" style="left:61.50px;top:449.00px;font-size:9.6px;letter-spacing:0px;color:#000;transform:scaleX(0.9828);transform-origin:0 0;">dllfile</div>
<div class="ab" style="left:33px;top:461.0px;width:9px;height:11px;background:#fff;"></div>
<svg style="left:34.5px;top:463.0px" width="5" height="7" viewBox="0 0 5 7"><polyline points="0.9,0.7 3.8,3.5 0.9,6.3" fill="none" stroke="#858585" stroke-width="1.3"/></svg>
<div class="ab" style="left:42.6px;top:466.0px;width:3px;height:1px;background:#b0b0b0;"></div>
<svg style="left:47px;top:460.8px" width="11" height="12" viewBox="0 0 11 12"><path d="M0.5 0.5 H8.5 V6 H10 V11.5 H0.5 Z" fill="#f8d878" stroke="#e6bf55" stroke-width="0.6"/><rect x="1.2" y="1.2" width="6.6" height="9.6" fill="#fbe08c"/></svg>
<div class="t" style="left:61.50px;top:463.00px;font-size:9.6px;letter-spacing:0px;color:#000;transform:scaleX(0.8537);transform-origin:0 0;">DLNA-PLAYSINGLE</div>
<div class="ab" style="left:37px;top:479.5px;width:9px;height:1px;background:#c0c0c0;"></div>
<svg style="left:47px;top:474.29999999999995px" width="11" height="12" viewBox="0 0 11 12"><path d="M0.5 0.5 H8.5 V6 H10 V11.5 H0.5 Z" fill="#f8d878" stroke="#e6bf55" stroke-width="0.6"/><rect x="1.2" y="1.2" width="6.6" height="9.6" fill="#fbe08c"/></svg>
<div class="t" style="left:61.50px;top:476.00px;font-size:9.6px;letter-spacing:0px;color:#000;transform:scaleX(0.9246);transform-origin:0 0;">DMAcc</div>
</div>
<div class="ab" style="left:149px;top:47px;width:12px;height:485px;background:#f0f0f0;"></div>
<div class="ab" style="left:149px;top:185px;width:11.5px;height:13px;background:#cdcdcd;"></div>
<svg style="left:151px;top:53px" width="7" height="5" viewBox="0 0 7 5"><polyline points="0.8,4.2 3.4,1.2 6,4.2" fill="none" stroke="#505050" stroke-width="1.4"/></svg>
<svg style="left:151px;top:523px" width="7" height="5" viewBox="0 0 7 5"><polyline points="0.8,0.8 3.4,3.8 6,0.8" fill="none" stroke="#505050" stroke-width="1.4"/></svg>
<div class="ab" style="left:1px;top:532px;width:160px;height:13px;background:#f0f0f0;"></div>
<div class="ab" style="left:14px;top:532.5px;width:48px;height:11.5px;background:#cdcdcd;"></div>
<svg style="left:5px;top:535.5px" width="5" height="6" viewBox="0 0 5 6"><polyline points="4,0.6 1.2,3 4,5.4" fill="none" stroke="#505050" stroke-width="1.4"/></svg>
<svg style="left:139.2px;top:535.5px" width="5" height="6" viewBox="0 0 5 6"><polyline points="1,0.6 3.8,3 1,5.4" fill="none" stroke="#505050" stroke-width="1.4"/></svg>
<div class="t" style="left:171.20px;top:53.00px;font-size:9.6px;letter-spacing:0px;color:#1a1a1a;transform:scaleX(0.9216);transform-origin:0 0;">Name</div>
<div class="t" style="left:261.50px;top:53.00px;font-size:9.6px;letter-spacing:0px;color:#1a1a1a;transform:scaleX(0.8500);transform-origin:0 0;">Type</div>
<div class="t" style="left:350.60px;top:53.00px;font-size:9.6px;letter-spacing:0px;color:#1a1a1a;transform:scaleX(0.8500);transform-origin:0 0;">Data</div>
<div class="ab" style="left:255px;top:48px;width:1px;height:16px;background:#ececec;"></div>
<div class="ab" style="left:345px;top:48px;width:1px;height:16px;background:#ececec;"></div>
<div class="ab" style="left:561px;top:48px;width:1px;height:16px;background:#ececec;"></div>
<svg style="left:169px;top:66.89999999999999px" width="13" height="13" viewBox="0 0 13 13"><path d="M0.8 1.2 H9.2 L11.6 3.4 V10.8 Q9.5 10 7.4 11 Q5 12.2 2.6 11.2 L0.8 10.4 Z" fill="#fff" stroke="#a8a8a8" stroke-width="0.8"/><text x="1.2" y="7.8" font-family="Liberation Sans" font-size="7.6" font-weight="bold" fill="#dc3c1e" letter-spacing="-0.3">ab</text></svg>
<div class="t" style="left:183.00px;top:70.00px;font-size:9.6px;letter-spacing:0px;color:#000;transform:scaleX(0.9291);transform-origin:0 0;">(Default)</div>
<div class="t" style="left:261.50px;top:70.00px;font-size:9.6px;letter-spacing:0px;color:#000;transform:scaleX(0.7342);transform-origin:0 0;">REG_SZ</div>
<div class="t" style="left:351.00px;top:70.00px;font-size:9.6px;letter-spacing:0px;color:#000;transform:scaleX(0.8876);transform-origin:0 0;">@shell32.dll,-8506</div>
<svg style="left:169px;top:81.1px" width="13" height="13" viewBox="0 0 13 13"><path d="M0.8 1.2 H9.2 L11.6 3.4 V10.8 Q9.5 10 7.4 11 Q5 12.2 2.6 11.2 L0.8 10.4 Z" fill="#fff" stroke="#a8a8a8" stroke-width="0.8"/><text x="1.2" y="7.8" font-family="Liberation Sans" font-size="7.6" font-weight="bold" fill="#dc3c1e" letter-spacing="-0.3">ab</text></svg>
<div class="t" style="left:183.00px;top:84.00px;font-size:9.6px;letter-spacing:0px;color:#000;transform:scaleX(0.8776);transform-origin:0 0;">Extended</div>
<div class="t" style="left:261.50px;top:84.00px;font-size:9.6px;letter-spacing:0px;color:#000;transform:scaleX(0.7342);transform-origin:0 0;">REG_SZ</div>
<svg style="left:169px;top:95.29999999999998px" width="13" height="13" viewBox="0 0 13 13"><path d="M0.8 1.2 H9.2 L11.6 3.4 V10.8 Q9.5 10 7.4 11 Q5 12.2 2.6 11.2 L0.8 10.4 Z" fill="#fff" stroke="#a8a8a8" stroke-width="0.8"/><g fill="none" stroke="#2446b8" stroke-width="1.1"><ellipse cx="3" cy="4.3" rx="1" ry="1.4"/><ellipse cx="5.8" cy="4.3" rx="1" ry="1.4"/><line x1="8.6" y1="2.9" x2="8.6" y2="5.8"/><line x1="3" y1="6.9" x2="3" y2="9.6"/><line x1="5.4" y1="6.9" x2="5.4" y2="9.6"/><ellipse cx="8.4" cy="8.3" rx="1.2" ry="1.2"/></g></svg>
<div class="t" style="left:183.00px;top:98.00px;font-size:9.6px;letter-spacing:0px;color:#000;transform:scaleX(0.8852);transform-origin:0 0;">HideBasedOnVel...</div>
<div class="t" style="left:261.50px;top:98.00px;font-size:9.6px;letter-spacing:0px;color:#000;transform:scaleX(0.8193);transform-origin:0 0;">REG_DWORD</div>
<div class="t" style="left:351.00px;top:98.00px;font-size:9.6px;letter-spacing:0px;color:#000;transform:scaleX(0.8507);transform-origin:0 0;">0x00639bc8 (6527944)</div>
<svg style="left:169px;top:109.49999999999999px" width="13" height="13" viewBox="0 0 13 13"><path d="M0.8 1.2 H9.2 L11.6 3.4 V10.8 Q9.5 10 7.4 11 Q5 12.2 2.6 11.2 L0.8 10.4 Z" fill="#fff" stroke="#a8a8a8" stroke-width="0.8"/><text x="1.2" y="7.8" font-family="Liberation Sans" font-size="7.6" font-weight="bold" fill="#dc3c1e" letter-spacing="-0.3">ab</text></svg>
<div class="t" style="left:183.00px;top:112.00px;font-size:9.6px;letter-spacing:0px;color:#000;transform:scaleX(0.9368);transform-origin:0 0;">NoWorkingDire...</div>
<div class="t" style="left:261.50px;top:112.00px;font-size:9.6px;letter-spacing:0px;color:#000;transform:scaleX(0.7342);transform-origin:0 0;">REG_SZ</div>
<div class="ab" style="left:0px;top:546px;width:1024px;height:28px;background:#121212;"></div>
<div class="ab" style="left:0px;top:546px;width:36px;height:28px;background:#121212;"></div>
<div class="ab" style="left:36px;top:546px;width:258px;height:28px;background:#3c3c3c;"></div>
<svg style="left:12px;top:554px" width="13" height="14" viewBox="0 0 13 14"><g fill="#fff">
<path d="M0 1.6 L4.2 1 V6.1 H0 Z"/><path d="M5 0.9 L12.3 0 V6.1 H5 Z"/><path d="M0 6.9 H4.2 V12.2 L0 11.6 Z"/><path d="M5 6.9 H12.3 V13 L5 12.3 Z"/></g></svg>
<svg style="left:42px;top:552px" width="18" height="18" viewBox="0 0 18 18"><circle cx="8.9" cy="9" r="7" fill="none" stroke="#fff" stroke-width="1.9"/></svg>
<div class="t" style="left:66.00px;top:556.00px;font-size:12px;letter-spacing:0px;color:#a8a8a8;transform:scaleX(0.9024);transform-origin:0 0;">Type here to search</div>
<svg style="left:272px;top:554px" width="12" height="14" viewBox="0 0 12 14"><rect x="3.5" y="0.8" width="5" height="9" rx="0.5" fill="none" stroke="#a0a0a0" stroke-width="1"/><path d="M1.5 7 Q1.5 12 6 12 Q10.5 12 10.5 7" fill="none" stroke="#a0a0a0" stroke-width="1"/><line x1="6" y1="12" x2="6" y2="13.5" stroke="#a0a0a0"/></svg>
<svg style="left:303px;top:555px" width="18" height="12" viewBox="0 0 18 12"><rect x="4" y="0.6" width="10" height="10.8" fill="none" stroke="#e8e8e8" stroke-width="1"/><polyline points="3.5,2 1,2 1,10 3.5,10" fill="none" stroke="#e8e8e8"/><polyline points="14.5,2 17,2 17,10 14.5,10" fill="none" stroke="#e8e8e8"/></svg>
<svg style="left:342px;top:552px" width="17" height="18" viewBox="0 0 17 18"><g fill="none" stroke="#1d8ce8"><path d="M14.6 9.6 A5.7 5.7 0 1 0 13.4 13.6" stroke-width="3.2"/><line x1="3" y1="9.2" x2="15.9" y2="9.2" stroke-width="2.6"/><path d="M0.8 9.8 Q1.8 2.6 10 2.2" stroke-width="2.2"/></g></svg>
<svg style="left:378px;top:554px" width="18" height="14" viewBox="0 0 18 14"><path d="M0.8 0.5 H6 L7.4 1.8 H17 V13 H0.8 Z" fill="#f2cf66"/><rect x="0.8" y="2.6" width="16.2" height="10.4" fill="#f8df8a"/><path d="M3.8 13.8 V7.8 H13.8 V13.8 H11.4 V10.2 H6.2 V13.8 Z" fill="#2fa3e6"/></svg>
<svg style="left:405px;top:548px" width="35" height="26" viewBox="0 0 35 26"><path d="M12.6 7.8 Q13.4 4 16.8 4 Q20 4 20.8 7.4" fill="none" stroke="#fff" stroke-width="1.3"/><polygon points="9.7,8.2 26,6.7 26,21.8 9.7,19.6" fill="#fff"/><g fill="#121212"><rect x="12.8" y="10.2" width="2.6" height="2.6"/><rect x="16.3" y="10" width="4.5" height="2.8"/><rect x="12.8" y="13.7" width="2.6" height="2.7"/><rect x="16.3" y="13.7" width="4.5" height="2.9"/></g></svg>
<svg style="left:452px;top:552px" width="17" height="16" viewBox="0 0 17 16"><rect x="0.6" y="0.6" width="15.8" height="14.8" fill="#071838" stroke="#8ab4e0" stroke-width="1.2"/><text x="3" y="11.5" font-family="Liberation Sans" font-size="8.5" font-weight="bold" fill="#9cc8f4" letter-spacing="-0.3">Ps</text></svg>
<svg style="left:488px;top:552px" width="18" height="18" viewBox="0 0 18 18">
<path d="M9 9 L2.07 5 A8 8 0 0 1 15.93 5 Z" fill="#db4437"/>
<path d="M9 9 L15.93 5 A8 8 0 0 1 9 17 Z" fill="#f4c20d"/>
<path d="M9 9 L9 17 A8 8 0 0 1 2.07 5 Z" fill="#0f9d58"/>
<circle cx="9" cy="9" r="3.8" fill="#fff"/><circle cx="9" cy="9" r="3" fill="#4285f4"/></svg>
<div class="ab" style="left:516px;top:546px;width:36px;height:28px;background:#393939;"></div>
<svg style="left:524px;top:550px" width="20" height="20" viewBox="0 0 20 20">
<polygon points="3,7.5 9,5.5 9,18 3,16" fill="#3db2f2"/>
<polygon points="9,5.5 16.5,7 16.5,16.5 9,18" fill="#1a86cf"/>
<g stroke="#0d4f80" stroke-width="0.7"><line x1="3" y1="11.5" x2="9" y2="9.7"/><line x1="3" y1="13.8" x2="9" y2="13.9"/><line x1="6" y1="6.5" x2="6" y2="17"/><line x1="9" y1="9.7" x2="16.5" y2="11"/><line x1="9" y1="13.9" x2="16.5" y2="13.8"/><line x1="12.7" y1="6.3" x2="12.7" y2="17.2"/></g>
<polygon points="10,3.3 12.2,1.6 14.2,3.3 12.2,5" fill="#55c0f5"/>
<polygon points="14.3,8 16.2,6.5 18,8 16.2,9.6" fill="#55c0f5"/>
</svg>
<svg style="left:562px;top:552px" width="17" height="16" viewBox="0 0 17 16"><rect x="0.6" y="0.6" width="15.8" height="14.8" fill="#071838" stroke="#8ab4e0" stroke-width="1.2"/><text x="3" y="11.5" font-family="Liberation Sans" font-size="8.5" font-weight="bold" fill="#9cc8f4" letter-spacing="-0.3">Ps</text></svg>
<svg style="left:598px;top:552px" width="18" height="18" viewBox="0 0 18 18"><circle cx="9" cy="9" r="8.6" fill="#d42a5b"/><path d="M4 5.5 L9 9 L4 12.5 M8 5.5 L13 9 L8 12.5" fill="none" stroke="#fff" stroke-width="1.5"/><path d="M3 9 H12" stroke="#fff" stroke-width="1.2"/></svg>
<svg style="left:813px;top:554px" width="14" height="13" viewBox="0 0 14 13"><g fill="none" stroke="#e8e8e8" stroke-width="1">
<circle cx="9" cy="3" r="2.2"/><path d="M5.5 10 Q6 6 9 6 Q12 6 12.5 10"/><circle cx="4" cy="6.5" r="2.2"/><path d="M0.8 12.8 Q1 9.5 4 9.5 Q7 9.5 7.2 12.8"/></g></svg>
<svg style="left:841px;top:557px" width="11" height="7" viewBox="0 0 11 7"><polyline points="1,6 5.5,1.5 10,6" fill="none" stroke="#e8e8e8" stroke-width="1.1"/></svg>
<svg style="left:858px;top:556px" width="14" height="10" viewBox="0 0 14 10"><rect x="3.5" y="3" width="9.5" height="6" fill="none" stroke="#e8e8e8" stroke-width="1"/><rect x="5" y="4.5" width="6.5" height="3" fill="#e8e8e8"/><path d="M0.5 1 H4 V4.5 H0.5 Z" fill="none" stroke="#e8e8e8" stroke-width="0.9"/></svg>
<svg style="left:877px;top:556px" width="12" height="11" viewBox="0 0 12 11"><g fill="none" stroke="#d0d0d0" stroke-width="1"><path d="M1 10 A9 9 0 0 1 10 1"/><path d="M3.5 10 A6.5 6.5 0 0 1 10 3.5"/><path d="M6 10 A4 4 0 0 1 10 6"/></g><circle cx="10" cy="9.5" r="1.2" fill="#fff"/></svg>
<svg style="left:893px;top:556px" width="14" height="11" viewBox="0 0 14 11"><path d="M1 3.5 H3.5 L7 0.8 V10.2 L3.5 7.5 H1 Z" fill="none" stroke="#e8e8e8" stroke-width="1"/><path d="M9 3.5 Q10 5.5 9 7.5 M10.8 2 Q12.6 5.5 10.8 9" fill="none" stroke="#e8e8e8" stroke-width="1"/></svg>
<div class="t" style="left:913.80px;top:557.00px;font-size:10px;letter-spacing:0px;color:#f0f0f0;transform:scaleX(0.7845);transform-origin:0 0;">ENG</div>
<div class="t" style="left:941.80px;top:550.00px;font-size:9.2px;letter-spacing:0px;color:#f0f0f0;transform:scaleX(0.9679);transform-origin:0 0;">11:11 AM</div>
<div class="t" style="left:941.20px;top:564.00px;font-size:9.2px;letter-spacing:0px;color:#f0f0f0;transform:scaleX(0.9310);transform-origin:0 0;">5/28/2017</div>
<svg style="left:992px;top:554px" width="20" height="19" viewBox="0 0 20 19"><path d="M1 1 H14 V10 H7 L4 13 V10 H1 Z" fill="#f0f0f0"/><g stroke="#101010" stroke-width="0.9"><line x1="3" y1="3.7" x2="12" y2="3.7"/><line x1="3" y1="5.9" x2="12" y2="5.9"/><line x1="3" y1="8.1" x2="10" y2="8.1"/></g>
<circle cx="12.5" cy="12.5" r="5.6" fill="#101010" stroke="#a8a8a8" stroke-width="1"/><text x="9.9" y="15.9" font-family="Liberation Sans" font-size="8.8" font-weight="bold" fill="#f0f0f0" style="will-change:transform">3</text></svg>
<div class="ab" style="left:1020px;top:546px;width:1px;height:28px;background:#505050;"></div>
<div class="ab" style="left:530px;top:101px;width:272px;height:338px;box-shadow:2px 3px 14px 2px rgba(0,0,0,0.2)"></div>
<div class="ab" style="left:530px;top:101px;width:272px;height:338px;background:#f0f0f0;border:1px solid #9489b0"></div>
<div class="ab" style="left:531px;top:102px;width:270px;height:22px;background:#fff;"></div>
<svg style="left:537.7px;top:106px" width="11" height="13" viewBox="0 0 11 13"><path d="M0.5 0.5 H8.5 V6 H10 V12.5 H0.5 Z" fill="#f8d878" stroke="#e6bf55" stroke-width="0.6"/><rect x="1.2" y="1.2" width="6.6" height="10.6" fill="#fbe08c"/></svg>
<div class="t" style="left:552.30px;top:108.00px;font-size:9.4px;letter-spacing:0px;color:#111;transform:scaleX(0.9561);transform-origin:0 0;-webkit-text-stroke-width:0.25px;">Permissions for cmd</div>
<svg style="left:785px;top:108px" width="10" height="10" viewBox="0 0 10 10"><line x1="1" y1="1" x2="9" y2="9" stroke="#222" stroke-width="1"/><line x1="9" y1="1" x2="1" y2="9" stroke="#222" stroke-width="1"/></svg>
<div class="ab" style="left:537px;top:144px;width:259px;height:265px;border:1px solid #fff;outline:1px solid #e2e2e2;background:#f0f0f0"></div>
<div class="ab" style="left:536px;top:129.5px;width:40px;height:16px;background:#fff;border:1px solid #d9d9d9;border-bottom:none"></div>
<div class="t" style="left:541.40px;top:132.00px;font-size:9.4px;letter-spacing:0px;color:#111;transform:scaleX(0.8187);transform-origin:0 0;-webkit-text-stroke-width:0.25px;">Security</div>
<div class="t" style="left:546.50px;top:152.00px;font-size:9.4px;letter-spacing:0px;color:#1a1a1a;transform:scaleX(0.8269);transform-origin:0 0;-webkit-text-stroke-width:0.25px;">Group or user names:</div>
<div class="ab" style="left:546px;top:164px;width:241px;height:77px;background:#fff;border:1px solid #939393"></div>
<div class="ab" style="left:547px;top:179px;width:225px;height:11.5px;background:#e5e5e5;"></div>
<svg style="left:550.5px;top:166.3px" width="13" height="12" viewBox="0 0 13 12">
<path d="M0.6 9.6 Q0.6 6 3.1 5.9 Q5.6 6 5.8 9.6 Z" fill="#78b060"/>
<ellipse cx="3.1" cy="3.1" rx="2.1" ry="2.5" fill="#d2bc88"/>
<path d="M4.9 10.3 Q4.9 6.4 8.6 6.3 Q12.2 6.4 12.2 10.3 Z" fill="#6a9ed2"/>
<ellipse cx="8.5" cy="3.4" rx="2.3" ry="2.7" fill="#5a4232"/>
</svg>
<div class="t" style="left:564.60px;top:168.00px;font-size:9.4px;letter-spacing:0px;color:#111;transform:scaleX(0.8357);transform-origin:0 0;-webkit-text-stroke-width:0.25px;">SYSTEM</div>
<svg style="left:550.5px;top:179.05px" width="13" height="12" viewBox="0 0 13 12">
<path d="M0.6 9.6 Q0.6 6 3.1 5.9 Q5.6 6 5.8 9.6 Z" fill="#6fa078"/>
<ellipse cx="3.1" cy="3.1" rx="2.1" ry="2.5" fill="#7a9a90"/>
<path d="M4.9 10.3 Q4.9 6.4 8.6 6.3 Q12.2 6.4 12.2 10.3 Z" fill="#6a9ed2"/>
<ellipse cx="8.5" cy="3.4" rx="2.3" ry="2.7" fill="#3a5068"/>
</svg>
<div class="t" style="left:564.60px;top:180.00px;font-size:9.4px;letter-spacing:0px;color:#111;transform:scaleX(0.8251);transform-origin:0 0;-webkit-text-stroke-width:0.25px;">Administrators (DESKTOP-LCK4QF2\Administrators)</div>
<svg style="left:550.5px;top:191.8px" width="13" height="12" viewBox="0 0 13 12">
<path d="M0.6 9.6 Q0.6 6 3.1 5.9 Q5.6 6 5.8 9.6 Z" fill="#78b060"/>
<ellipse cx="3.1" cy="3.1" rx="2.1" ry="2.5" fill="#d2bc88"/>
<path d="M4.9 10.3 Q4.9 6.4 8.6 6.3 Q12.2 6.4 12.2 10.3 Z" fill="#6a9ed2"/>
<ellipse cx="8.5" cy="3.4" rx="2.3" ry="2.7" fill="#5a4232"/>
</svg>
<div class="t" style="left:564.60px;top:193.00px;font-size:9.4px;letter-spacing:0px;color:#111;transform:scaleX(0.8386);transform-origin:0 0;-webkit-text-stroke-width:0.25px;">Users (DESKTOP-LCK4QF2\Users)</div>
<svg style="left:550.5px;top:204.55px" width="13" height="12" viewBox="0 0 13 12">
<path d="M0.6 9.6 Q0.6 6 3.1 5.9 Q5.6 6 5.8 9.6 Z" fill="#78b060"/>
<ellipse cx="3.1" cy="3.1" rx="2.1" ry="2.5" fill="#d2bc88"/>
<path d="M4.9 10.3 Q4.9 6.4 8.6 6.3 Q12.2 6.4 12.2 10.3 Z" fill="#6a9ed2"/>
<ellipse cx="8.5" cy="3.4" rx="2.3" ry="2.7" fill="#5a4232"/>
</svg>
<div class="t" style="left:564.60px;top:206.00px;font-size:9.4px;letter-spacing:0px;color:#111;transform:scaleX(0.8335);transform-origin:0 0;-webkit-text-stroke-width:0.25px;">TrustedInstaller</div>
<div class="ab" style="left:773px;top:165px;width:13px;height:63px;background:#f0f0f0;"></div>
<div class="ab" style="left:773px;top:190.5px;width:12px;height:24px;background:#cdcdcd;"></div>
<svg style="left:776px;top:170px" width="7" height="5" viewBox="0 0 7 5"><polyline points="0.8,4.2 3.4,1.2 6,4.2" fill="none" stroke="#505050" stroke-width="1.3"/></svg>
<svg style="left:776px;top:219px" width="7" height="5" viewBox="0 0 7 5"><polyline points="0.8,0.8 3.4,3.8 6,0.8" fill="none" stroke="#505050" stroke-width="1.3"/></svg>
<div class="ab" style="left:547px;top:227px;width:226px;height:13px;background:#f0f0f0;"></div>
<div class="ab" style="left:773px;top:227px;width:13px;height:13px;background:#f0f0f0;"></div>
<div class="ab" style="left:561px;top:228px;width:188px;height:11px;background:#cdcdcd;"></div>
<svg style="left:551px;top:230.5px" width="5" height="6" viewBox="0 0 5 6"><polyline points="4,0.6 1.2,3 4,5.4" fill="none" stroke="#505050" stroke-width="1.3"/></svg>
<svg style="left:764px;top:230.5px" width="5" height="6" viewBox="0 0 5 6"><polyline points="1,0.6 3.8,3 1,5.4" fill="none" stroke="#505050" stroke-width="1.3"/></svg>
<div class="ab" style="left:669px;top:247px;width:55px;height:16px;background:#e1e1e1;border:1px solid #b4b4b4"></div>
<div class="t" style="left:686.00px;top:250.00px;font-size:9.4px;letter-spacing:0px;color:#111;transform:scaleX(0.8551);transform-origin:0 0;-webkit-text-stroke-width:0.25px;">Add...</div>
<div class="ab" style="left:731px;top:247px;width:54px;height:16px;background:#e1e1e1;border:1px solid #b4b4b4"></div>
<div class="t" style="left:743.55px;top:250.00px;font-size:9.4px;letter-spacing:0px;color:#111;transform:scaleX(0.8257);transform-origin:0 0;-webkit-text-stroke-width:0.25px;">Remove</div>
<div class="t" style="left:547.00px;top:273.00px;font-size:9.4px;letter-spacing:0px;color:#1a1a1a;transform:scaleX(0.8067);transform-origin:0 0;-webkit-text-stroke-width:0.25px;">Permissions for Administrators</div>
<div class="t" style="left:703.20px;top:274.00px;font-size:9.4px;letter-spacing:0px;color:#1a1a1a;transform:scaleX(0.8013);transform-origin:0 0;-webkit-text-stroke-width:0.25px;">Allow</div>
<div class="t" style="left:748.90px;top:274.00px;font-size:9.4px;letter-spacing:0px;color:#1a1a1a;transform:scaleX(0.8340);transform-origin:0 0;-webkit-text-stroke-width:0.25px;">Deny</div>
<div class="ab" style="left:546px;top:285px;width:241px;height:74px;background:#fff;border:1px solid #939393"></div>
<div class="t" style="left:555.80px;top:290.00px;font-size:9.4px;letter-spacing:0px;color:#111;transform:scaleX(0.7907);transform-origin:0 0;-webkit-text-stroke-width:0.25px;">Full Control</div>
<div class="t" style="left:555.80px;top:303.00px;font-size:9.4px;letter-spacing:0px;color:#111;transform:scaleX(0.6898);transform-origin:0 0;-webkit-text-stroke-width:0.25px;">Read</div>
<div class="t" style="left:555.80px;top:317.00px;font-size:9.4px;letter-spacing:0px;color:#111;transform:scaleX(0.8171);transform-origin:0 0;-webkit-text-stroke-width:0.25px;">Special permissions</div>
<svg style="left:704.6px;top:289px" width="10" height="10" viewBox="0 0 10 10"><rect x="0.5" y="0.5" width="9" height="9" fill="#fff" stroke="#505050" stroke-width="1"/><polyline points="1.6,4.9 3.6,7.3 8.1,3.1" fill="none" stroke="#404040" stroke-width="1.15"/></svg>
<svg style="left:749.8px;top:289px" width="10" height="10" viewBox="0 0 10 10"><rect x="0.5" y="0.5" width="9" height="9" fill="#fff" stroke="#505050" stroke-width="1"/></svg>
<svg style="left:704.6px;top:303px" width="10" height="10" viewBox="0 0 10 10"><rect x="0.5" y="0.5" width="9" height="9" fill="#fff" stroke="#505050" stroke-width="1"/><polyline points="1.6,4.9 3.6,7.3 8.1,3.1" fill="none" stroke="#404040" stroke-width="1.15"/></svg>
<svg style="left:749.8px;top:303px" width="10" height="10" viewBox="0 0 10 10"><rect x="0.5" y="0.5" width="9" height="9" fill="#fff" stroke="#505050" stroke-width="1"/></svg>
<svg style="left:704.6px;top:316.5px" width="10" height="10" viewBox="0 0 10 10"><rect x="0.5" y="0.5" width="9" height="9" fill="#fff" stroke="#d6d6d6" stroke-width="1"/></svg>
<svg style="left:749.8px;top:316.5px" width="10" height="10" viewBox="0 0 10 10"><rect x="0.5" y="0.5" width="9" height="9" fill="#fff" stroke="#d6d6d6" stroke-width="1"/></svg>
<div class="ab" style="left:703px;top:288px;width:13.5px;height:12.5px;border:1px dotted #8a8a8a"></div>
<div class="t" style="left:546.50px;top:365.00px;font-size:9.4px;letter-spacing:0px;color:#1a1a1a;transform:scaleX(0.8338);transform-origin:0 0;-webkit-text-stroke-width:0.25px;">For special permissions or advanced settings,</div>
<div class="t" style="left:546.50px;top:375.00px;font-size:9.4px;letter-spacing:0px;color:#1a1a1a;transform:scaleX(0.8674);transform-origin:0 0;-webkit-text-stroke-width:0.25px;">click Advanced.</div>
<div class="ab" style="left:719px;top:365px;width:66px;height:16px;background:#e1e1e1;border:1px solid #b4b4b4"></div>
<div class="t" style="left:733.95px;top:369.00px;font-size:9.4px;letter-spacing:0px;color:#111;transform:scaleX(0.8635);transform-origin:0 0;-webkit-text-stroke-width:0.25px;">Advanced</div>
<div class="ab" style="left:620px;top:416px;width:55px;height:16px;background:#e1e1e1;border:2px solid #0078d7"></div>
<div class="t" style="left:641.60px;top:419.00px;font-size:9.4px;letter-spacing:0px;color:#111;transform:scaleX(0.8688);transform-origin:0 0;-webkit-text-stroke-width:0.25px;">OK</div>
<div class="ab" style="left:681px;top:416px;width:54px;height:16px;background:#e1e1e1;border:1px solid #b4b4b4"></div>
<div class="t" style="left:695.50px;top:420.00px;font-size:9.4px;letter-spacing:0px;color:#111;transform:scaleX(0.8544);transform-origin:0 0;-webkit-text-stroke-width:0.25px;">Cancel</div>
<div class="ab" style="left:741px;top:416px;width:55px;height:16px;background:#e1e1e1;border:1px solid #b4b4b4"></div>
<div class="t" style="left:758.75px;top:420.00px;font-size:9.4px;letter-spacing:0px;color:#111;transform:scaleX(0.8293);transform-origin:0 0;-webkit-text-stroke-width:0.25px;">Apply</div>
<svg style="left:0;top:0" width="1024" height="574" viewBox="0 0 1024 574"><g fill="#e8195e"><polygon points="684.9,305.9 696.2,298.0 695,296.1 702.1,296.0 699.0,302.2 697.8,300.4"/><polygon points="736.0,459.0 746.4,444.5 743.8,442.2 753.0,438.8 752.2,448.4 749.6,446.6"/></g></svg>
</body></html>
